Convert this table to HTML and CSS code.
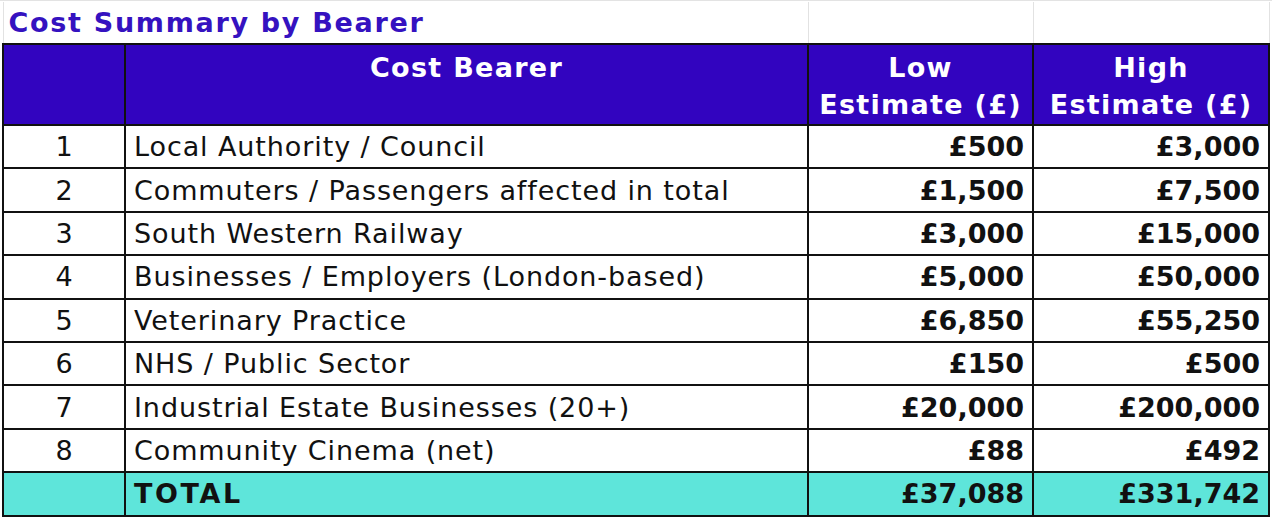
FILE: index.html
```html
<!DOCTYPE html>
<html>
<head>
<meta charset="utf-8">
<link rel="stylesheet" href="styles.css">
</head>
<body>
<div class="sheet">
<table class="grid">
  <colgroup>
    <col class="c-a"><col class="c-b"><col class="c-c"><col class="c-d">
  </colgroup>
  <tr class="title-row">
    <td colspan="2" class="title">Cost Summary by Bearer</td>
    <td class="blank"></td>
    <td class="blank"></td>
  </tr>
  <tr class="head">
    <th></th>
    <th>Cost Bearer</th>
    <th>Low<br>Estimate (£)</th>
    <th>High<br>Estimate (£)</th>
  </tr>
  <tr><td class="num">1</td><td class="name">Local Authority / Council</td><td class="amt">£500</td><td class="amt">£3,000</td></tr>
  <tr><td class="num">2</td><td class="name">Commuters / Passengers affected in total</td><td class="amt">£1,500</td><td class="amt">£7,500</td></tr>
  <tr><td class="num">3</td><td class="name">South Western Railway</td><td class="amt">£3,000</td><td class="amt">£15,000</td></tr>
  <tr><td class="num">4</td><td class="name">Businesses / Employers (London-based)</td><td class="amt">£5,000</td><td class="amt">£50,000</td></tr>
  <tr><td class="num">5</td><td class="name">Veterinary Practice</td><td class="amt">£6,850</td><td class="amt">£55,250</td></tr>
  <tr><td class="num">6</td><td class="name">NHS / Public Sector</td><td class="amt">£150</td><td class="amt">£500</td></tr>
  <tr><td class="num">7</td><td class="name">Industrial Estate Businesses (20+)</td><td class="amt">£20,000</td><td class="amt">£200,000</td></tr>
  <tr><td class="num">8</td><td class="name">Community Cinema (net)</td><td class="amt">£88</td><td class="amt">£492</td></tr>
  <tr class="total"><td class="num"></td><td class="name">TOTAL</td><td class="amt">£37,088</td><td class="amt">£331,742</td></tr>
</table>
</div>
</body>
</html>
```
FILE: styles.css
```css
html, body {
  margin: 0;
  padding: 0;
  background: #ffffff;
}
.sheet {
  padding: 1px 0 0 2px;
  border-top: 1px solid #e3e3e3;
  font-family: "DejaVu Sans", "Open Sans", sans-serif;
}
.grid {
  border-collapse: collapse;
  table-layout: fixed;
  width: 1268px;
}
.c-a { width: 122px; }
.c-b { width: 683px; }
.c-c { width: 225px; }
.c-d { width: 236px; }
.grid td, .grid th {
  border: 2px solid #111111;
  padding: 0 8px;
  white-space: nowrap;
  overflow: hidden;
}
.title-row td {
  border: 1px solid #e2e2e2;
  border-bottom: 2px solid #111111;
  height: 41px;
}
.title-row .title {
  border-left: 1px solid #e2e2e2;
  border-top: none;
  color: #3512c0;
  font-weight: bold;
  font-size: 27px;
  padding: 0 5px;
  vertical-align: middle;
  letter-spacing: 1.7px;
}
.title-row .blank {
  border-top: none;
}
.head th {
  background: #3204bf;
  color: #ffffff;
  font-weight: bold;
  font-size: 27px;
  line-height: 37px;
  letter-spacing: 1.3px;
  text-align: center;
  vertical-align: top;
  height: 75px;
  padding: 4px 4px 0;
}
.grid tr:not(.title-row):not(.head) td {
  height: 41.4px;
  font-size: 27px;
  color: #111111;
  vertical-align: middle;
}
.num {
  text-align: center;
}
.name {
  text-align: left;
  letter-spacing: 0.9px;
}
.amt {
  text-align: right;
  font-weight: bold;
}
.total td {
  background: #5ee5da;
}
.total .name {
  font-weight: bold;
  letter-spacing: 2.6px;
}
```
